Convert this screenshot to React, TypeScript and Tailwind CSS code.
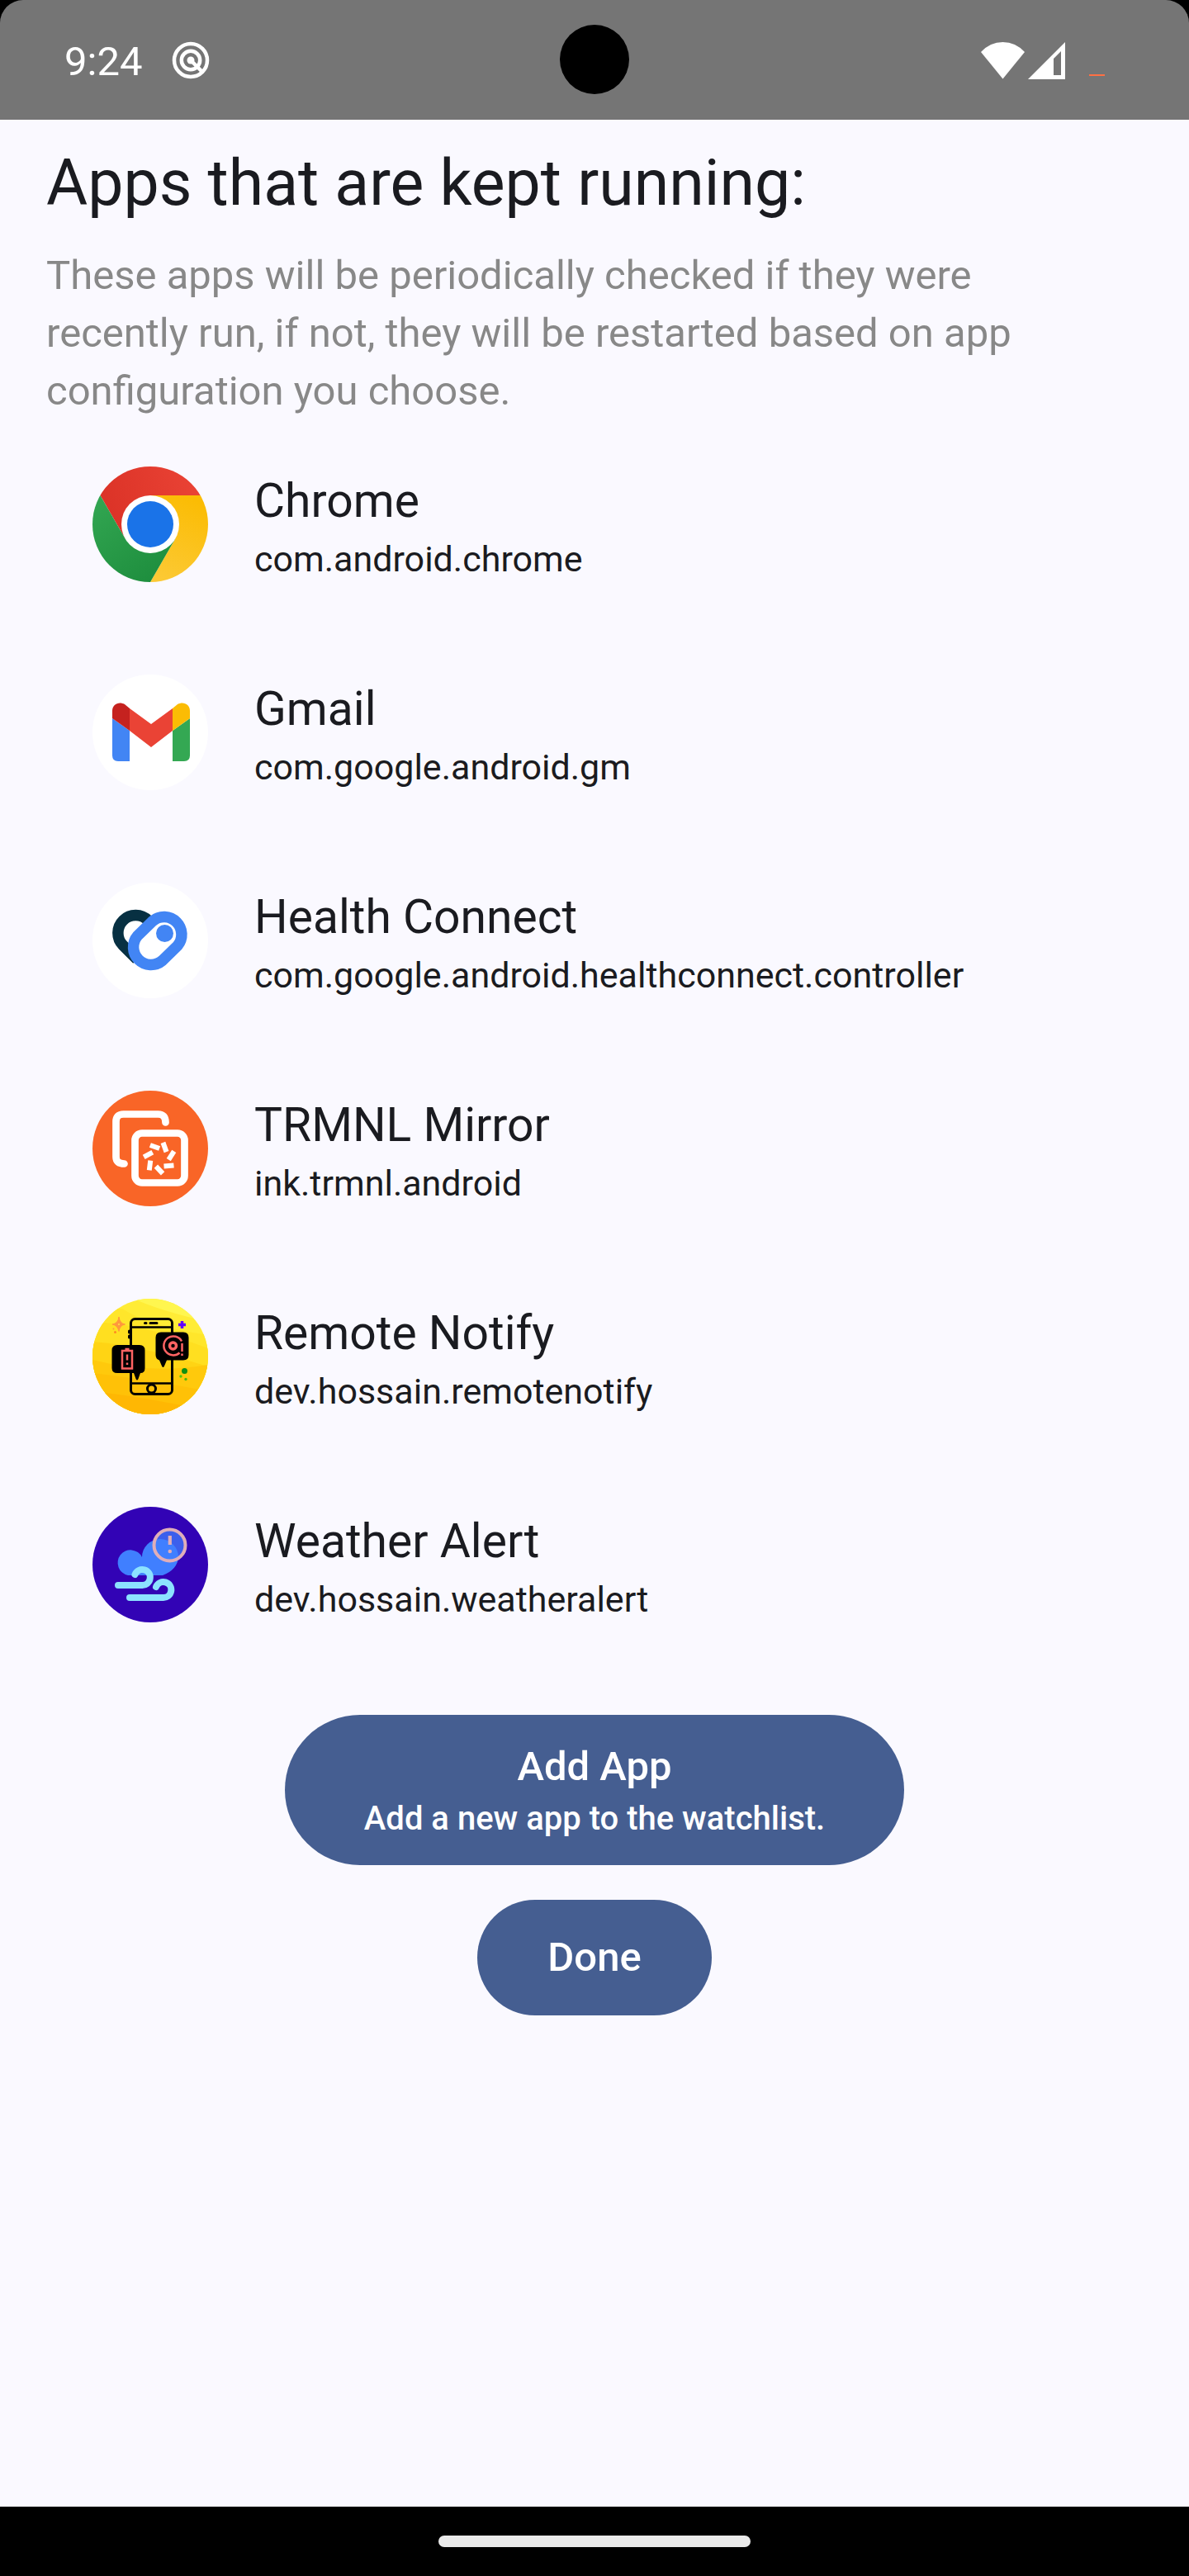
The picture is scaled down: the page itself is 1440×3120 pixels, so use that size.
import { useId, type ReactNode } from "react";

function ChromeIcon() {
  const id = useId();
  return (
    <svg viewBox="0 0 140 140" className="size-[140px]" aria-hidden="true">
      <defs>
        <clipPath id={id + "c"}><circle cx="70" cy="70" r="70" /></clipPath>
        <linearGradient id={id + "r"} x1="0" y1="0.8" x2="1" y2="0.6"><stop stopColor="#d93025" /><stop offset="1" stopColor="#ea4335" /></linearGradient>
        <linearGradient id={id + "y"} x1="0.6" y1="0" x2="0.3" y2="1"><stop stopColor="#fbbc04" /><stop offset="1" stopColor="#fcc934" /></linearGradient>
        <linearGradient id={id + "g"} x1="0.1" y1="0" x2="0.7" y2="1"><stop stopColor="#34a853" /><stop offset="1" stopColor="#1e8e3e" /></linearGradient>
      </defs>
      <g clipPath={`url(#${id}c)`}>
        <path d="M0 0H140V35H70L39.7 87.5L9.4 35L0 30Z" fill={`url(#${id}r)`} />
        <path d="M70 35H140V140H70L100.3 87.5Z" fill={`url(#${id}y)`} />
        <path d="M9.4 35L39.7 87.5L70 100L100.3 87.5L70 140H0V20Z" fill={`url(#${id}g)`} />
      </g>
      <circle cx="70" cy="70" r="35" fill="#fff" />
      <circle cx="70" cy="70" r="28" fill="#1a73e8" />
    </svg>
  );
}

function GmailIcon() {
  return (
    <svg viewBox="0 0 140 140" className="size-[140px]" aria-hidden="true">
      <circle cx="70" cy="70" r="70" fill="#fff" />
      <path d="M24 53L45 68V105H31Q24 105 24 98Z" fill="#4285f4" />
      <path d="M118 53L97 68V105H111Q118 105 118 98Z" fill="#34a853" />
      <path d="M45 41L71 60L97 41V68L71 88L45 68Z" fill="#ea4335" />
      <path d="M24 53V44C24 36 32 32 39 36L45 41V68Z" fill="#c5221f" />
      <path d="M118 53V44C118 36 110 32 103 36L97 41V68Z" fill="#fbbc04" />
    </svg>
  );
}

function HealthIcon() {
  return (
    <svg viewBox="0 0 140 140" className="size-[140px]" aria-hidden="true">
      <circle cx="70" cy="70" r="70" fill="#fff" />
      <path d="M75 52L67.500 46A21.300 21.300 0 0 0 37 76L54 93" fill="none" stroke="#073042" strokeWidth="13.500" />
      <path d="M73 46.500A21.300 21.300 0 0 1 103 76.500L84.500 94.500A21.300 21.300 0 0 1 54.500 64.500Z" fill="#fff" stroke="#4285f4" strokeWidth="13.500" />
      <circle cx="87.500" cy="61.500" r="10.500" fill="#4285f4" />
    </svg>
  );
}

function TrmnlIcon() {
  const bars = [
    [75.5, 68, 20],
    [87.5, 68.5, 70],
    [95.5, 78.5, 123],
    [92.5, 91, 175],
    [81, 96, 47],
    [69.5, 90.5, 97],
    [67.5, 77.5, 152],
  ];
  return (
    <svg viewBox="0 0 140 140" className="size-[140px]" aria-hidden="true">
      <circle cx="70" cy="70" r="70" fill="#f96527" />
      <g fill="none" stroke="#fff" strokeWidth="8.700" strokeLinecap="round">
        <path d="M88.500 38.500Q88.500 28.500 79.500 28.500H37.500Q28.500 28.500 28.500 37.500V80Q28.500 88.500 38.500 88.500" />
        <rect x="51.500" y="51.500" width="60" height="60" rx="8.500" />
      </g>
      {bars.map(([x, y, a]) => (
        <rect key={a} x={x - 6} y={y - 3} width="12" height="6" fill="#fff" transform={`rotate(${a} ${x} ${y})`} />
      ))}
    </svg>
  );
}

function RemoteIcon() {
  const id = useId();
  return (
    <svg viewBox="0 0 140 140" className="size-[140px]" aria-hidden="true">
      <defs><clipPath id={id}><circle cx="70" cy="70" r="70" /></clipPath></defs>
      <g clipPath={`url(#${id})`}>
        <rect width="140" height="140" fill="#ffec36" />
        <path d="M50 0Q80 14 140 28V0Z" fill="#fff64f" />
        <path d="M0 12H36Q70 34 140 44V140H0Z" fill="#ffe62b" />
        <path d="M0 28Q60 30 140 60V140H0Z" fill="#ffdf20" />
        <path d="M0 52Q50 55 140 82V140H0Z" fill="#ffd414" />
        <path d="M0 74Q70 92 140 80V140H0Z" fill="#ffc90c" />
        <path d="M0 90Q70 98 140 112V140H0Z" fill="#ffc107" />
        <path d="M0 112Q70 120 140 136V140H0Z" fill="#ffb703" />
      </g>
      <g fill="none" stroke="#000" strokeWidth="3">
        <rect x="46.500" y="24.500" width="50" height="91" rx="5" />
        <path d="M47 34.500H96M47 102.500H96" strokeWidth="2.500" />
        <circle cx="71.500" cy="109" r="5" strokeWidth="3" />
        <path d="M63.500 29.500H65M70 29.500H78" strokeLinecap="round" />
        <path d="M44.500 39V41M44.500 45V47" strokeLinecap="round" />
      </g>
      <path d="M30 56H57Q63.500 56 63.500 62.500V84Q63.500 90 58 90L55.500 97Q54 100 52.500 97L50 90H30Q23.500 90 23.500 84V62.500Q23.500 56 30 56Z" />
      <path d="M83 40.500H110Q116.500 40.500 116.500 47V68Q116.500 74.500 110 74.500H90L87 81.500Q85.500 84.500 84 81.500L81 74.500Q76.500 73 76.500 68V47Q76.500 40.500 83 40.500Z" />
      <g fill="none" stroke="#ff6363" strokeWidth="2.500">
        <path d="M36 63H48V84.500H36ZM39.500 61H44.500M42 67.500V74.500M42 77.500V80" />
        <path d="M108 51.500A11.500 11.500 0 1 0 105.500 65.500M108.500 54V64M108.500 66.500V69" />
        <circle cx="97.500" cy="57" r="4" strokeWidth="3.500" />
      </g>
      <path d="M32 22Q33 30 39.500 31Q33 32 32 39.500Q30.500 32 24 31Q31 30 32 22Z" fill="#ff983d" stroke="#ff983d" strokeLinejoin="round" />
      <circle cx="32" cy="31" r="1" fill="#ffe34a" />
      <circle cx="27.500" cy="40.500" r="1.500" fill="#ff8a20" />
      <circle cx="25.500" cy="36.500" r="1" fill="#ff983d" />
      <path d="M108.500 27V36M104 31.500H113" stroke="#6200ff" strokeWidth="3.500" />
      <circle cx="111.500" cy="87.500" r="3.500" fill="#109010" />
      <circle cx="107" cy="94" r="1.700" fill="#54c80c" />
      <circle cx="113" cy="97.500" r="1.700" fill="#54b80c" />
    </svg>
  );
}

function WeatherIcon() {
  return (
    <svg viewBox="0 0 140 140" className="size-[140px]" aria-hidden="true">
      <circle cx="70" cy="70" r="70" fill="#3203b5" />
      <path d="M43 83A15.500 15.500 0 1 1 60 61A22 22 0 0 1 104 61Q103 76 85 83Z" fill="#407fff" />
      <circle cx="93.500" cy="46.500" r="19" fill="#407fff" fillOpacity="0.750" stroke="#e0aeb9" strokeWidth="4" />
      <path d="M93.800 35V46" stroke="#e0aeb9" strokeWidth="4.200" />
      <circle cx="93.800" cy="54" r="2.300" fill="#e0aeb9" />
      <g fill="none" stroke="#8ce2ff" strokeWidth="8" strokeLinecap="round">
        <path d="M31 95H60A9.500 9.500 0 1 0 51.500 82" />
        <path d="M45 110H85A9.500 9.500 0 1 0 77 97" />
      </g>
    </svg>
  );
}

const apps: { name: string; pkg: string; icon: ReactNode }[] = [
  { name: "Chrome", pkg: "com.android.chrome", icon: <ChromeIcon /> },
  { name: "Gmail", pkg: "com.google.android.gm", icon: <GmailIcon /> },
  { name: "Health Connect", pkg: "com.google.android.healthconnect.controller", icon: <HealthIcon /> },
  { name: "TRMNL Mirror", pkg: "ink.trmnl.android", icon: <TrmnlIcon /> },
  { name: "Remote Notify", pkg: "dev.hossain.remotenotify", icon: <RemoteIcon /> },
  { name: "Weather Alert", pkg: "dev.hossain.weatheralert", icon: <WeatherIcon /> },
];

function StatusBar() {
  return (
    <header className="bg-black">
      <div className="relative flex h-[145px] items-center justify-between rounded-t-[28px] bg-[#757575] pr-[102px] pl-[78px] text-white">
        <div className="flex items-center gap-9">
          <time className="pt-1 text-[49px] leading-[58px]">9:24</time>
          <svg viewBox="0 0 46 46" className="size-[46px]" fill="none" stroke="#fff" aria-hidden="true">
            <circle cx="23" cy="23" r="20" strokeWidth="4.500" />
            <circle cx="23" cy="23" r="11.200" strokeWidth="4.500" />
            <circle cx="23" cy="23" r="4.500" fill="#fff" stroke="none" />
            <path d="M23 23L36.500 36.500" strokeWidth="4.500" />
          </svg>
        </div>
        <div className="absolute top-[30px] left-1/2 size-[84px] -translate-x-1/2 rounded-full bg-black" />
        <svg viewBox="0 0 150 46" className="h-[46px] w-[150px]" aria-hidden="true">
          <path d="M0 13Q11 1 26.500 1T53 13L26.500 45.500Z" fill="#fff" />
          <path d="M57 46L102 1V46ZM88 21V41H97V12Z" fill="#fff" fillRule="evenodd" />
          <path d="M131 40H150V42H131Z" fill="#ff7043" />
        </svg>
      </div>
    </header>
  );
}

export default function App() {
  return (
    <div className="flex min-h-screen flex-col bg-[#faf9ff] font-[Roboto,sans-serif] text-[#1a1b20]">
      <StatusBar />
      <main className="flex flex-1 flex-col">
        <div className="flex flex-col gap-7 px-14 pt-7">
          <h1 className="text-[77px] leading-[98px]">Apps that are kept running:</h1>
          <p className="pr-20 text-[49px] leading-[70px] text-[#888888]">
            These apps will be periodically checked if they were recently run, if not, they will be restarted based on app configuration you choose.
          </p>
        </div>
        <ul className="flex flex-col">
          {apps.map((app) => (
            <li key={app.pkg} className="flex items-center gap-14 px-28 py-14">
              {app.icon}
              <div className="flex flex-col">
                <h2 className="text-[57px] leading-[84px]">{app.name}</h2>
                <p className="text-[43px] leading-[56px]">{app.pkg}</p>
              </div>
            </li>
          ))}
        </ul>
        <div className="flex flex-col items-center gap-[42px] pt-14 font-medium text-white">
          <button type="button" className="flex min-w-[750px] flex-col items-center rounded-full bg-[#455e91] px-[84px] py-7">
            <span className="text-[49px] leading-[70px]">Add App</span>
            <span className="text-[40px] leading-[56px]">Add a new app to the watchlist.</span>
          </button>
          <button type="button" className="min-w-[284px] rounded-full bg-[#455e91] px-[84px] py-[35px] text-[49px] leading-[70px]">
            Done
          </button>
        </div>
      </main>
      <footer className="flex h-[84px] items-center justify-center bg-black">
        <div className="h-[14px] w-[378px] rounded-full bg-[#eaeaea]" />
      </footer>
    </div>
  );
}
